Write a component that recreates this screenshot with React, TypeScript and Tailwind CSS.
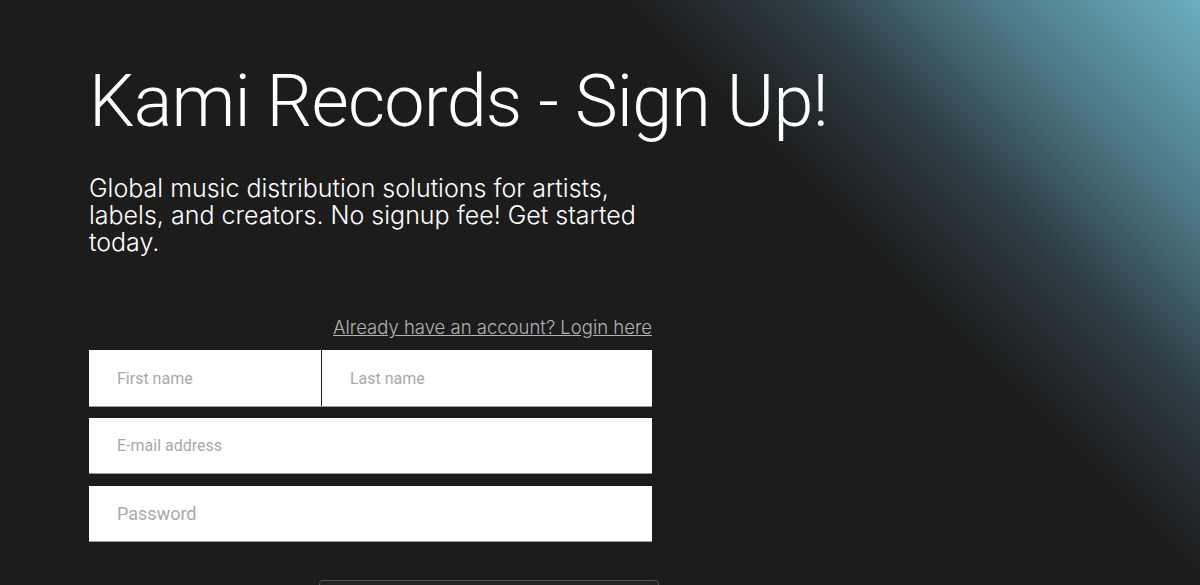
import React from "react";

const fields = "h-14 bg-white pl-7 text-[#333] placeholder:text-[#a9a9a9] outline-none font-['Roboto',sans-serif]";

export default function App() {
  return (
    <div className="min-h-screen w-full overflow-hidden bg-[#1c1c1c] bg-[linear-gradient(225deg,#6cafc1_0%,#4b7683_12%,#2c3b41_22%,#1c1c1c_31%)] font-['Roboto',sans-serif] text-white">
      <div className="px-[89px] pt-[59px]">
        <h1 className="text-[72px] font-light leading-[1.2] tracking-[-0.8px]">Kami Records - Sign Up!</h1>

        <p className="mt-[30px] w-[560px] font-['Inter',sans-serif] text-[25px] font-light leading-[27px]">
          Global music distribution solutions for artists, labels, and creators. No signup fee! Get started today.
        </p>

        <form className="mt-[59px] flex w-[563px] flex-col">
          <div className="flex justify-end">
            <a href="#" className="font-['Inter',sans-serif] text-[18.5px] font-light leading-[24px] text-[#b3b3b3] underline">
              Already have an account? Login here
            </a>
          </div>

          <div className="mt-[11px] flex border-b border-[#999]">
            <input className={`${fields} w-[232px] text-[16px]`} placeholder="First name" />
            <input className={`${fields} min-w-0 flex-1 border-l border-[#1c1c1c] text-[16px]`} placeholder="Last name" />
          </div>

          <input className={`${fields} mt-[11px] border-b border-[#999] text-[16px]`} placeholder="E-mail address" />
          <input className={`${fields} mt-[12px] border-b border-[#999] text-[18px]`} placeholder="Password" />

          <button
            type="button"
            className="ml-[230px] mt-[38px] h-[90px] w-[340px] rounded-[4px] border border-[#555] bg-[#222] text-[18px] text-white"
          >
            Sign Up
          </button>
        </form>
      </div>
    </div>
  );
}
